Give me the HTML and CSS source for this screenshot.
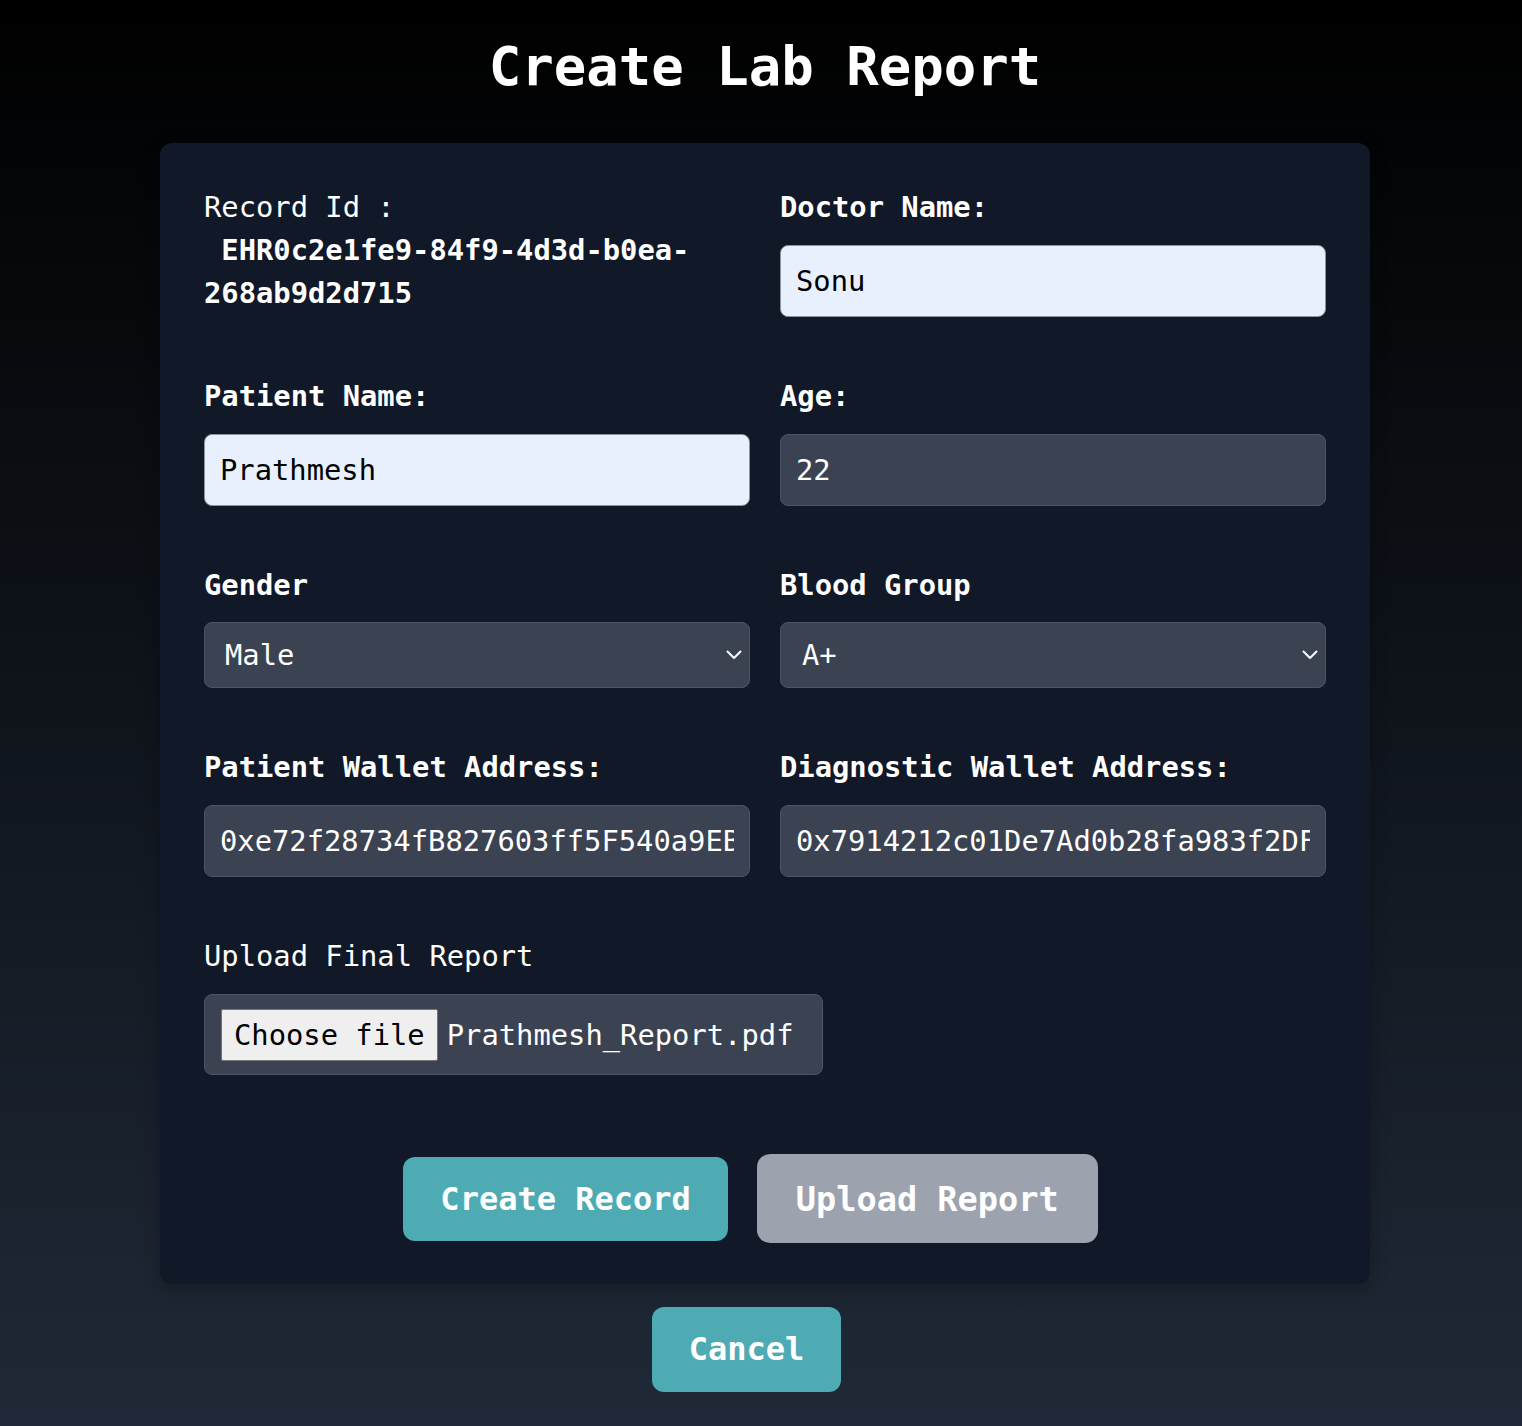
FILE: index.html
```html
<!DOCTYPE html>
<html lang="en">
<head>
<meta charset="utf-8">
<title>Create Lab Report</title>
<link rel="stylesheet" href="styles.css">
</head>
<body>
<div class="page">
  <div class="wrap">
    <h1 class="title">Create Lab Report</h1>
    <form class="card">
      <div class="grid">
        <div class="field">
          <p class="record">Record Id : <b class="record-id">&nbsp;EHR0c2e1fe9-84f9-4d3d-b0ea-268ab9d2d715</b></p>
        </div>
        <div class="field">
          <label class="label">Doctor Name:</label>
          <input class="input autofill" type="text" value="Sonu">
        </div>
        <div class="field">
          <label class="label">Patient Name:</label>
          <input class="input autofill" type="text" value="Prathmesh">
        </div>
        <div class="field">
          <label class="label">Age:</label>
          <input class="input" type="text" value="22">
        </div>
        <div class="field">
          <label class="label">Gender</label>
          <div class="select-wrap">
            <select class="select"><option>Male</option><option>Female</option><option>Other</option></select>
            <svg class="chev" viewBox="0 0 16 10" width="16" height="10"><path d="M1.5 1.5 L8 8 L14.5 1.5" fill="none" stroke="#fff" stroke-width="2" stroke-linecap="round" stroke-linejoin="round"/></svg>
          </div>
        </div>
        <div class="field">
          <label class="label">Blood Group</label>
          <div class="select-wrap">
            <select class="select sel-b"><option>A+</option><option>A-</option><option>B+</option><option>O+</option></select>
            <svg class="chev" viewBox="0 0 16 10" width="16" height="10"><path d="M1.5 1.5 L8 8 L14.5 1.5" fill="none" stroke="#fff" stroke-width="2" stroke-linecap="round" stroke-linejoin="round"/></svg>
          </div>
        </div>
        <div class="field">
          <label class="label">Patient Wallet Address:</label>
          <input class="input" type="text" value="0xe72f28734fB827603ff5F540a9EB4c1D2a9f3e18">
        </div>
        <div class="field">
          <label class="label">Diagnostic Wallet Address:</label>
          <input class="input" type="text" value="0x7914212c01De7Ad0b28fa983f2DF5aC31b7e0d24">
        </div>
      </div>
      <div class="upload">
        <p class="upload-label">Upload Final Report</p>
        <div class="file">
          <span class="file-btn">Choose file</span>
          <span class="file-name">Prathmesh_Report.pdf</span>
        </div>
      </div>
      <div class="actions">
        <button type="button" class="btn btn-teal">Create Record</button>
        <button type="button" class="btn btn-gray">Upload Report</button>
      </div>
    </form>
  </div>
  <div class="cancel-row">
    <button type="button" class="btn btn-teal btn-cancel">Cancel</button>
  </div>
</div>
</body>
</html>
```

FILE: styles.css
```css
* { box-sizing: border-box; }
html {
  margin: 0;
  padding: 0;
  background: linear-gradient(to bottom, #000000, #1f2937);
  min-height: 100%;
}
body {
  margin: 0;
  padding: 0;
  font-family: "DejaVu Sans Mono", monospace;
  color: #fff;
  background: transparent;
}
.page {
  min-height: 1426px;
}
.wrap {
  padding: 26px 0 0 8px;
}
.title {
  margin: 0 0 36px;
  text-align: center;
  font-size: 54px;
  line-height: 81px;
  font-weight: 700;
  color: #fff;
}
.card {
  width: 1210px;
  margin: 0 auto;
  background: #111827;
  border-radius: 12px;
  padding: 43px 44px 41px;
  box-shadow: 0 4px 18px rgba(0, 0, 0, 0.25);
}
.grid {
  display: grid;
  grid-template-columns: 1fr 1fr;
  column-gap: 30px;
  row-gap: 58px;
}
.field { display: flex; flex-direction: column; align-items: stretch; }
.record {
  margin: 0;
  font-size: 28.8px;
  line-height: 43px;
  font-weight: 400;
}
.record-id {
  display: inline-block;
  font-weight: 700;
}
.label {
  display: block;
  font-size: 28.8px;
  line-height: 43px;
  font-weight: 700;
  margin-bottom: 16px;
}
.input {
  display: block;
  width: 100%;
  height: 72px;
  font-family: "DejaVu Sans Mono", monospace;
  font-size: 28.8px;
  line-height: 42px;
  padding: 14px 15px;
  border: 1px solid #4b5563;
  border-radius: 8px;
  background: #3b4252;
  color: #fff;
  outline: none;
}
.input.autofill {
  background: #e8f0fe;
  color: #000;
  border-color: #8b93a1;
}
.select-wrap { position: relative; margin-top: -1px; }
.select {
  display: block;
  width: 100%;
  height: 66px;
  appearance: none;
  -webkit-appearance: none;
  font-family: "DejaVu Sans Mono", monospace;
  font-size: 28.8px;
  line-height: 42px;
  padding: 11px 40px 11px 20px;
  border: 1px solid #4b5563;
  border-radius: 8px;
  background: #3b4252;
  color: #fff;
  outline: none;
}
.sel-b { padding-left: 21px; }
.chev {
  position: absolute;
  right: 8px;
  top: 28px;
  width: 16px;
  height: 10px;
  pointer-events: none;
}
.upload { margin-top: 58px; }
.upload-label {
  margin: 0 0 16px;
  font-size: 28.8px;
  line-height: 43px;
  font-weight: 400;
}
.file {
  display: inline-flex;
  align-items: center;
  gap: 9px;
  padding: 14px 29px 13px 16px;
  border: 1px solid #4b5563;
  border-radius: 8px;
  background: #3b4252;
  font-size: 28.8px;
  line-height: 43px;
}
.file-btn {
  display: inline-block;
  padding: 3.5px 12px;
  background: #efefef;
  color: #000;
  border: 1px solid #767676;
  border-radius: 2px;
}
.file-name { color: #fff; }
.actions {
  margin-top: 79px;
  display: flex;
  justify-content: center;
  align-items: center;
}
.btn {
  font-family: "DejaVu Sans Mono", monospace;
  font-size: 32px;
  line-height: 48px;
  font-weight: 700;
  color: #fff;
  border: none;
  border-radius: 12px;
  margin-right: 29px;
  cursor: pointer;
}
.btn-teal {
  background: #4eabb3;
  padding: 18px 37px;
}
.btn-gray {
  background: #9ca3af;
  font-size: 33.6px;
  line-height: 50px;
  padding: 21px 39px 18px;
  border-radius: 13px;
}
.cancel-row {
  margin-top: 23px;
  display: flex;
  justify-content: center;
}
.btn-cancel {
  padding: 18px 37px 19px;
}
```
